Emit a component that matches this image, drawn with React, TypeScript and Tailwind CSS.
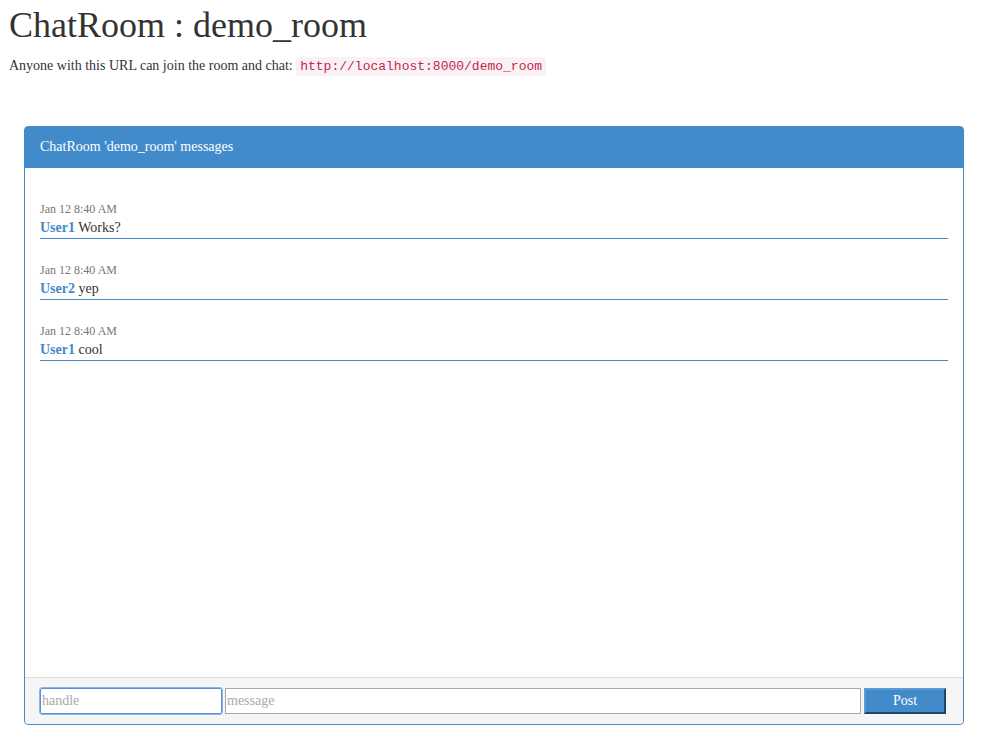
const messages = [
  { time: "Jan 12 8:40 AM", user: "User1", text: "Works?" },
  { time: "Jan 12 8:40 AM", user: "User2", text: "yep" },
  { time: "Jan 12 8:40 AM", user: "User1", text: "cool" },
]

export default function App() {
  return (
    <div className="min-h-[743px] bg-white px-[9px] font-['Liberation_Serif',serif] text-[14px] leading-[20px] text-[#333]">
      <h1 className="pt-[5px] text-[36px] leading-[40px] text-[#333]">ChatRoom : demo_room</h1>
      <p className="mt-[11px]">
        Anyone with this URL can join the room and chat:{" "}
        <code className="rounded bg-[#f9f2f4] px-[4px] py-[2px] font-['Liberation_Mono',monospace] text-[13px] text-[#c7254e]">
          http://localhost:8000/demo_room
        </code>
      </p>

      <div className="ml-[15px] mt-[49px] flex h-[599px] w-[940px] flex-col rounded border border-[#428bca]">
        <div className="bg-[#428bca] px-[15px] py-[10px] text-white border-b border-[#428bca]">
          ChatRoom 'demo_room' messages
        </div>

        <div className="flex-1 px-[15px] pt-[33px]">
          {messages.map((m, i) => (
            <div key={i} className="mb-[23px]">
              <div className="text-[12px] leading-[16px] text-[#777]">{m.time}</div>
              <div className="border-b border-[#428bca] pt-[1px]">
                <span className="font-bold text-[#428bca]">{m.user}</span> {m.text}
              </div>
            </div>
          ))}
        </div>

        <div className="flex gap-[3px] rounded-b border-t border-[#ddd] bg-[#f5f5f5] px-[15px] py-[10px]">
          <input
            placeholder="handle"
            className="h-[26px] w-[182px] rounded-[2px] border border-[#5b8fd9] bg-white px-[1px] font-['Liberation_Serif',serif] text-[14px] text-[#333] outline outline-1 outline-[#8fb4ec] placeholder:text-[#aaa]"
          />
          <input
            placeholder="message"
            className="h-[26px] w-[636px] border border-[#a9a9a9] bg-white px-[1px] font-['Liberation_Serif',serif] text-[14px] text-[#333] outline-none placeholder:text-[#aaa]"
          />
          <button className="h-[26px] w-[82px] border-2 border-t-[#5d9bd6] border-l-[#5d9bd6] border-r-[#1f4666] border-b-[#1f4666] bg-[#428bca] font-['Liberation_Serif',serif] text-[14px] text-white">
            Post
          </button>
        </div>
      </div>
    </div>
  )
}
